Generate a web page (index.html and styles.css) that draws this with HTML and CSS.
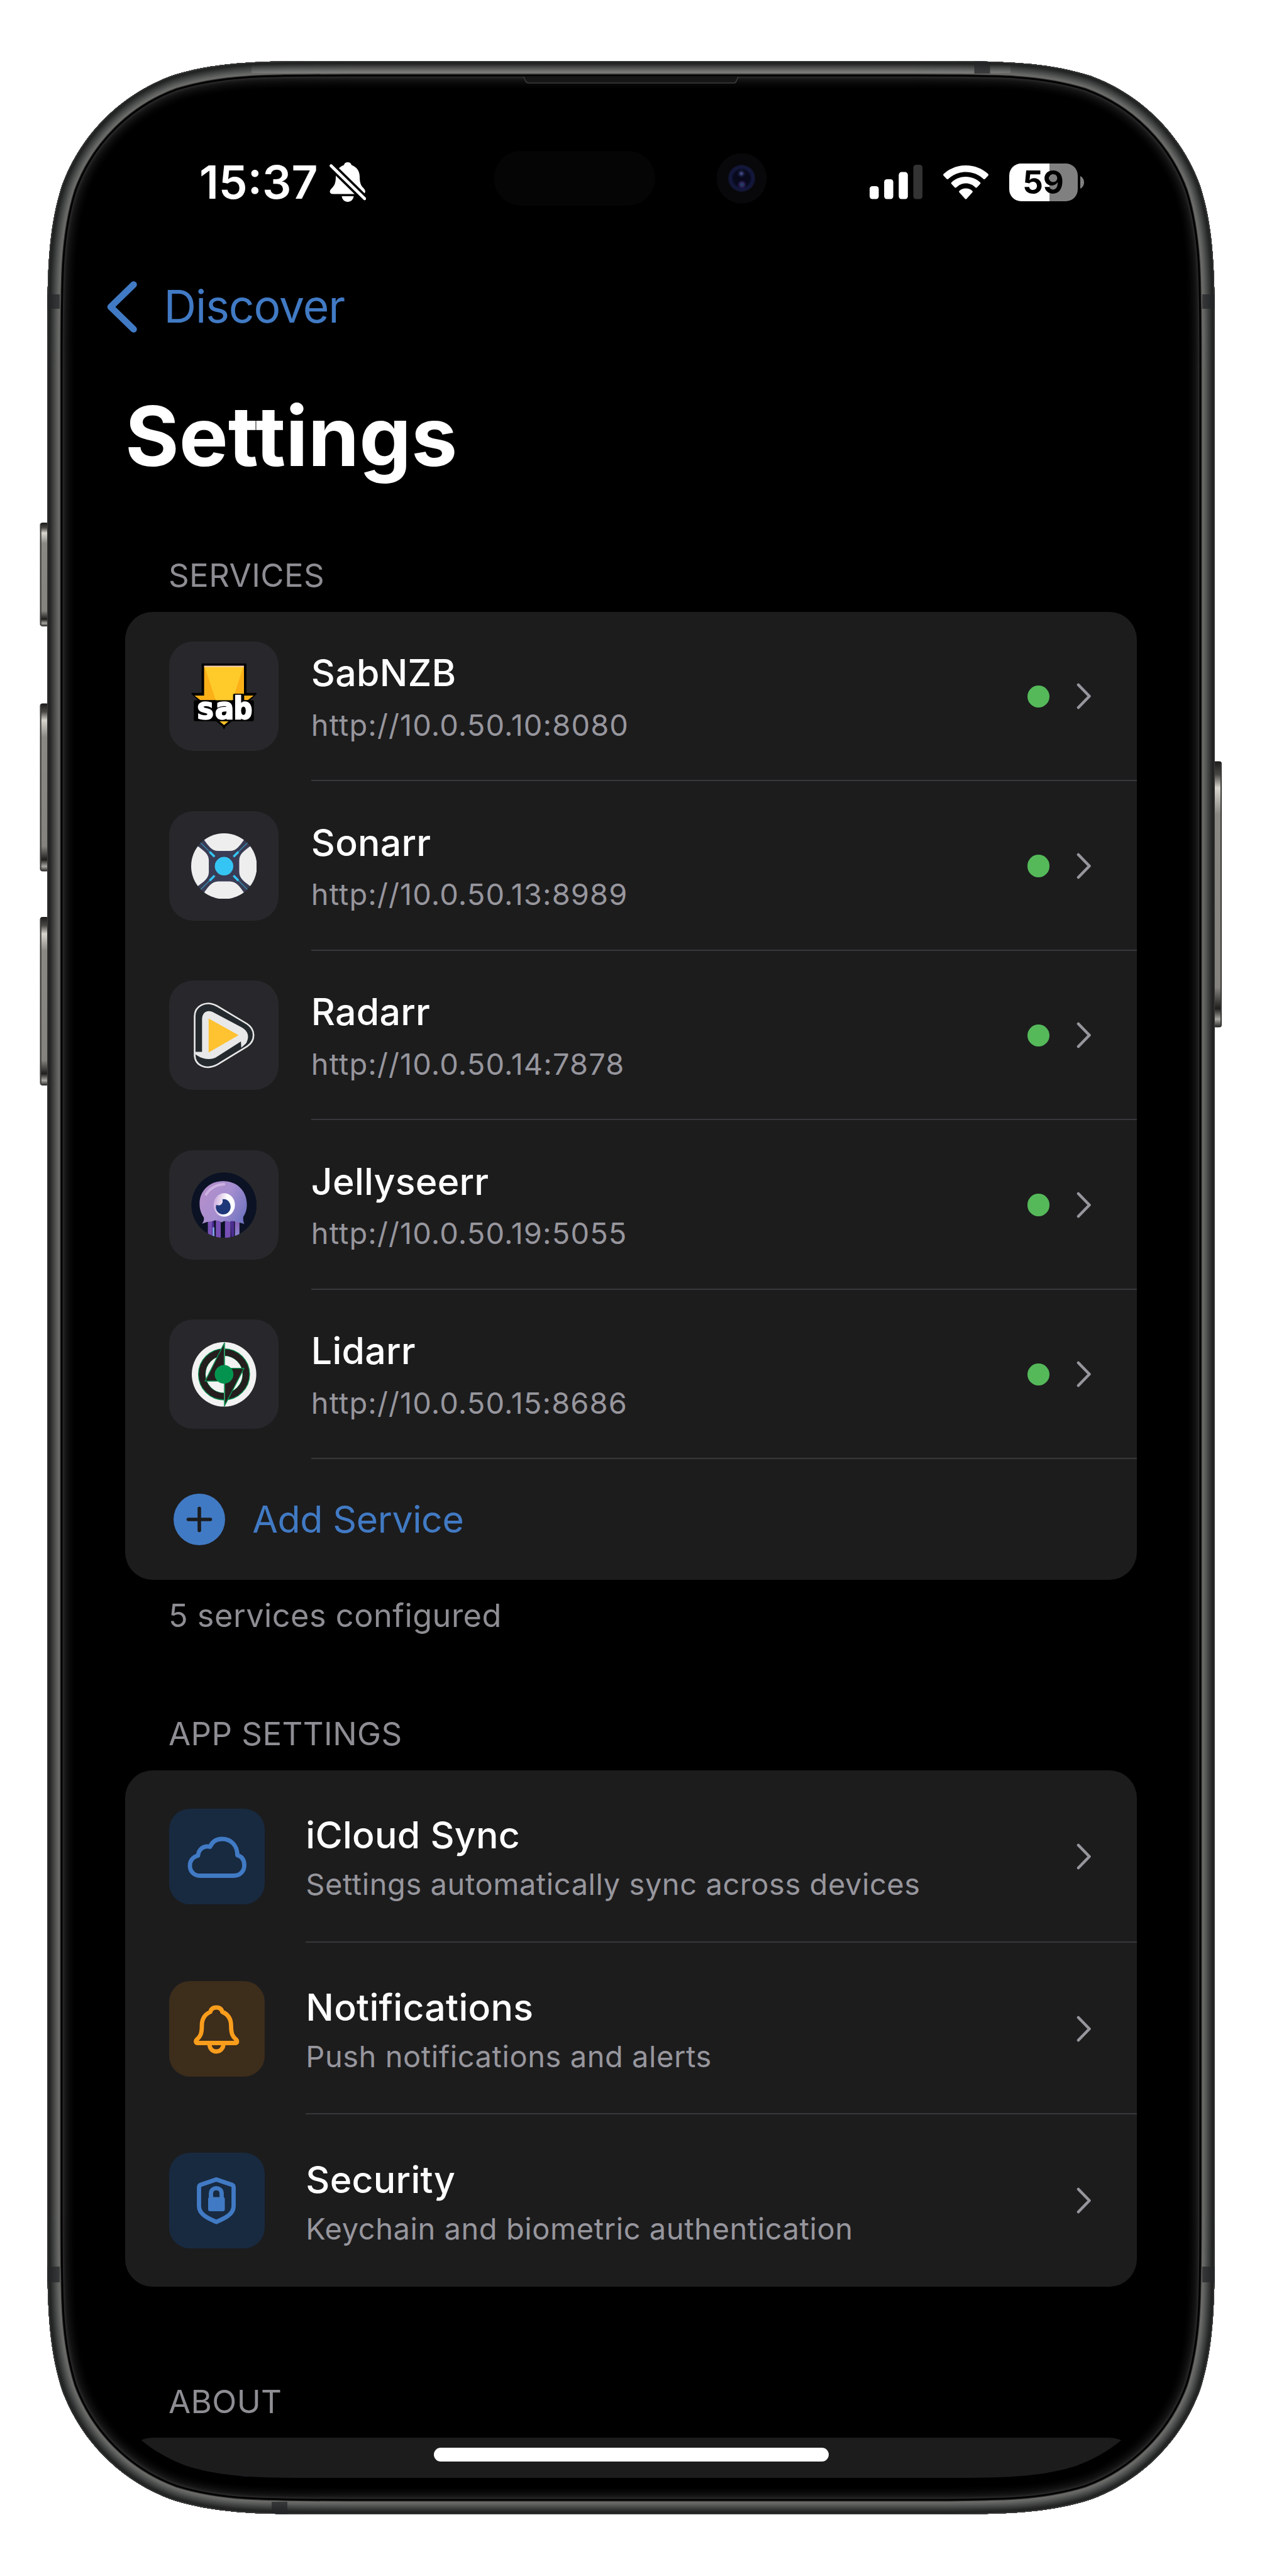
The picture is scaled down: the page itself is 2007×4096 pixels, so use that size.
FILE: index.html
```html
<!DOCTYPE html>
<html lang="en">
<head>
<meta charset="utf-8">
<title>Settings</title>
<link rel="stylesheet" href="styles.css">
</head>
<body>
<div class="phone">
  <svg class="chassis" viewBox="0 0 2007 4096" aria-hidden="true">
    <defs>
      <path id="body" d="M555 97H1452C1590.2 97 1659.3 97 1733.7 120.5C1814.9 150.1 1878.9 214.1 1908.5 295.3C1932 369.7 1932 438.8 1932 577V3518C1932 3656.2 1932 3725.3 1908.5 3799.7C1878.9 3880.9 1814.9 3944.9 1733.7 3974.5C1659.3 3998 1590.2 3998 1452 3998H555C416.8 3998 347.7 3998 273.3 3974.5C192.1 3944.9 128.1 3880.9 98.5 3799.7C75 3725.3 75 3656.2 75 3518V577C75 438.8 75 369.7 98.5 295.3C128.1 214.1 192.1 150.1 273.3 120.5C347.7 97 416.8 97 555 97Z"/>
      <clipPath id="bodyClip"><use href="#body"/></clipPath>
      <linearGradient id="key" x1="0" y1="0" x2="0" y2="1">
        <stop offset="0" stop-color="#1c1b1a"/><stop offset=".05" stop-color="#4a4845"/><stop offset=".1" stop-color="#d8d5ce"/><stop offset=".2" stop-color="#8a8883"/><stop offset=".85" stop-color="#85837e"/><stop offset=".93" stop-color="#1f1e1d"/><stop offset=".97" stop-color="#aaa8a2"/><stop offset="1" stop-color="#222"/>
      </linearGradient>
      <radialGradient id="lens"><stop offset="0" stop-color="#07071a"/><stop offset=".6" stop-color="#080a1c"/><stop offset=".8" stop-color="#14183f"/><stop offset="1" stop-color="#10142c"/></radialGradient>
      <radialGradient id="glintA"><stop offset="0" stop-color="#5560a8"/><stop offset="1" stop-color="#14183f" stop-opacity="0"/></radialGradient>
      <radialGradient id="glintB"><stop offset="0" stop-color="#14505a"/><stop offset=".5" stop-color="#32205e"/><stop offset="1" stop-color="#14183f" stop-opacity="0"/></radialGradient>
      <linearGradient id="topLight" x1="0" y1="0" x2="0" y2="1"><stop offset="0" stop-color="#fff" stop-opacity=".14"/><stop offset="1" stop-color="#fff" stop-opacity="0"/></linearGradient>
    </defs>
    <g fill="url(#key)">
      <rect x="63.7" y="831" width="14" height="165" rx="4"/>
      <rect x="63.7" y="1118.6" width="14" height="267" rx="4"/>
      <rect x="63.7" y="1458" width="14" height="268" rx="4"/>
      <rect x="1929" y="1210.4" width="14" height="423" rx="4"/>
    </g>
    <g fill="#3a3937">
      <rect x="63.7" y="833" width="2" height="161"/><rect x="63.7" y="1121" width="2" height="262"/><rect x="63.7" y="1461" width="2" height="262"/><rect x="1941" y="1213" width="2" height="418"/>
    </g>
    <g clip-path="url(#bodyClip)" fill="none">
      <use href="#body" fill="#000"/>
      <use href="#body" stroke="#020202" stroke-width="86"/>
      <use href="#body" stroke="#050505" stroke-width="80"/>
      <use href="#body" stroke="#090909" stroke-width="74"/>
      <use href="#body" stroke="#0e0e0e" stroke-width="68"/>
      <use href="#body" stroke="#141414" stroke-width="62"/>
      <use href="#body" stroke="#1c1c1c" stroke-width="57"/>
      <use href="#body" stroke="#262626" stroke-width="53"/>
      <use href="#body" stroke="#000" stroke-width="49"/>
      <use href="#body" stroke="#2c2c2c" stroke-width="43.5"/>
      <use href="#body" stroke="#6b6b68" stroke-width="41"/>
      <use href="#body" stroke="#666764" stroke-width="37"/>
      <use href="#body" stroke="#5c5e5c" stroke-width="33"/>
      <use href="#body" stroke="#525453" stroke-width="29"/>
      <use href="#body" stroke="#484a49" stroke-width="25"/>
      <use href="#body" stroke="#3e403f" stroke-width="21"/>
      <use href="#body" stroke="#343535" stroke-width="17"/>
      <use href="#body" stroke="#2a2b2b" stroke-width="13"/>
      <use href="#body" stroke="#222323" stroke-width="9"/>
      <use href="#body" stroke="#3a3a3a" stroke-width="2.4"/>
      <rect x="400" y="102" width="1207" height="14" fill="url(#topLight)" transform="matrix(1 0 0 -1 0 218)"/>
      <g fill="#25272a" opacity=".75">
        <rect x="75" y="468" width="20" height="23"/><rect x="1912" y="468" width="20" height="23"/>
        <rect x="75" y="3604" width="20" height="25"/><rect x="1912" y="3604" width="20" height="25"/>
        <rect x="1549.5" y="97" width="25" height="20"/><rect x="432" y="3978" width="25" height="20"/>
      </g>
    </g>
    <path d="M833 121.5L836 129Q838 131.8 842 131.8H1167Q1170 131.8 1171 129L1173.5 121.5Z" fill="#161616"/>
    <path d="M832.5 122L836 129Q838 132 842 132H1167Q1170 132 1171 129L1174 122" fill="none" stroke="#3c3c3c" stroke-width="1.5"/>
    <rect x="785.5" y="240" width="256.5" height="87" rx="43.5" fill="#050505"/>
    <circle cx="1179.5" cy="283.5" r="40" fill="#080709"/>
    <circle cx="1179.5" cy="283.5" r="21.5" fill="url(#lens)"/>
    <circle cx="1179" cy="276" r="7" fill="url(#glintA)"/>
    <circle cx="1180" cy="293.5" r="7.5" fill="url(#glintB)"/>
  </svg>

  <main class="screen">
    <div class="status">
      <div class="status-left">
        <span class="time">15:37</span>
        <svg class="muted" viewBox="0 0 58 63"><path fill="#fff" d="M29 0C32.5 0 34.6 2 35 4.5C43.5 7.5 48 14 48 23C48 33 50 37 54 41C57.5 44.5 57.5 48 55.5 49.5Q54.5 50.5 52 50.5H6C0 50.5 -1 46 3 42C8 37 10 33 10 23C10 14 14.5 7.5 23 4.5C23.4 2 25.5 0 29 0ZM19.5 54H38.5C38 59 34 63 29 63S20 59 19.5 54Z"/><path d="M2.5 5.5L56 58" stroke="#000" stroke-width="12"/><path d="M2.5 5.5L56 58" stroke="#fff" stroke-width="4.6" stroke-linecap="round"/></svg>
      </div>
      <div class="status-right">
        <svg class="bars" viewBox="0 0 84 55"><g fill="#fff"><rect y="34" width="14.5" height="20.5" rx="4.5"/><rect x="23.1" y="23" width="14.5" height="31.5" rx="4.5"/><rect x="46.3" y="11.6" width="14.5" height="42.9" rx="4.5"/></g><rect x="69.5" width="14.5" height="54.5" rx="4.5" fill="#333"/></svg>
        <svg class="wifi" viewBox="0 0 72 54"><g fill="#fff"><path d="M36 0C50 0 62.5 5.2 71.3 13.6Q72.6 15 71.3 16.4L66.5 21.5Q65.2 22.7 63.9 21.5C56.5 14.6 46.8 10.6 36 10.6S15.5 14.6 8.1 21.5Q6.8 22.7 5.5 21.5L.7 16.4Q-.6 15 .7 13.6C9.5 5.2 22 0 36 0Z"/><path d="M36 18C45 18 53 21.5 58.8 27Q60 28.3 58.8 29.6L53.7 34.9Q52.4 36 51.1 34.9C47.1 31 41.8 28.6 36 28.6S24.9 31 20.9 34.9Q19.6 36 18.3 34.9L13.2 29.6Q12 28.3 13.2 27C19 21.5 27 18 36 18Z"/><path d="M36 36.5C40 36.5 43.6 38 46.3 40.4Q47.4 41.6 46.3 43L37.3 53Q36 54.4 34.7 53L25.7 43Q24.6 41.6 25.7 40.4C28.4 38 32 36.5 36 36.5Z"/></g></svg>
        <div class="battery"><span class="pct">59</span></div>
        <svg class="nub" viewBox="0 0 6 20"><path d="M0 0C4 2 6 6 6 10S4 18 0 20Z" fill="#808080"/></svg>
      </div>
    </div>

    <nav class="nav">
      <svg class="back" viewBox="0 0 48 82"><path d="M42.5 5.5L6 41L42.5 76.5" fill="none" stroke="#417ac4" stroke-width="10.5" stroke-linecap="round" stroke-linejoin="round"/></svg>
      <span class="nav-label">Discover</span>
    </nav>

    <h1 class="title">Settings</h1>

    <h2 class="head head-services">SERVICES</h2>
    <section class="card">
      <div class="row">
        <div class="tile">
          <svg class="logo" viewBox="0 0 160 160"><path d="M27 0H133V73H158L139 92H101L80 158L59 92H21L2 73H27Z" fill="#000" stroke="#000" stroke-width="3" stroke-linejoin="round"/><path d="M31.5 6.5H128.5V78H152L138 89H22L8 78H31.5Z" fill="#fcb017"/><path d="M33 8H127L100 90H60Z" fill="#ffcb2b"/><path d="M31.5 7H128.5" stroke="#f7cfc0" stroke-width="3"/><path d="M62 138H98L80 153Z" fill="#ffc228" stroke="#000" stroke-width="5" stroke-linejoin="round"/><path d="M10 89.5H102V77Q102 73.5 106 73.5H126Q129 73.5 129 77V89.5H149Q152.5 89.5 152.5 93V137Q152.5 140.500 149 140.500H10Q6.5 140.500 6.5 137V93Q6.5 89.500 10 89.500Z" fill="#000"/><text class="sab" x="12" y="134" textLength="137" lengthAdjust="spacingAndGlyphs">sab</text></svg>
        </div>
        <div class="cell"><div class="labels"><span class="name">SabNZB</span><span class="sub">http://10.0.50.10:8080</span></div><i class="dot"></i><svg class="chev" viewBox="0 0 24 42"><path d="M3 3L20.5 21L3 39"/></svg></div>
      </div>
      <div class="row">
        <div class="tile">
          <svg class="logo" viewBox="0 0 160 160"><defs><clipPath id="son"><circle cx="80" cy="80" r="80"/></clipPath></defs><g clip-path="url(#son)"><rect width="160" height="160" fill="#3a3d54"/><g fill="#eee"><path id="lobe" d="M30 14C42 30 50 43 66 43H94C110 43 118 30 130 14L120 -10H40Z"/><use href="#lobe" transform="rotate(90 80 80)"/><use href="#lobe" transform="rotate(180 80 80)"/><use href="#lobe" transform="rotate(270 80 80)"/></g><g stroke="#35c5f4"><path d="M57 57L45 45M103 57L115 45M57 103L45 115M103 103L115 115" stroke-width="5.5"/><path d="M45 45L22 22M115 45L138 22M45 115L22 138M115 115L138 138" stroke-width="1.6" opacity=".75"/></g><circle cx="80" cy="80" r="22.5" fill="#35c5f4"/></g></svg>
        </div>
        <div class="cell"><div class="labels"><span class="name">Sonarr</span><span class="sub">http://10.0.50.13:8989</span></div><i class="dot"></i><svg class="chev" viewBox="0 0 24 42"><path d="M3 3L20.5 21L3 39"/></svg></div>
      </div>
      <div class="row">
        <div class="tile">
          <svg class="logo" viewBox="0 0 160 160"><path d="M8.5 34C8.5 8 36 -6 62 8L136 52C157 66 157 93 136 107L64 151C36 166 8.5 153 8.5 127Z" fill="#24292e" stroke="#e8e8e8" stroke-width="4"/><path d="M26.5 42C26.5 24 38 17 52 23L122 60C140 70 142 84 134 99L122 110L121 95L64 131C50 141 28 140 10 126V120H26.5Z" fill="#e8e8e8"/><path d="M42.5 39L115.5 79.5L42.5 121.5Z" fill="#ffc230"/></svg>
        </div>
        <div class="cell"><div class="labels"><span class="name">Radarr</span><span class="sub">http://10.0.50.14:7878</span></div><i class="dot"></i><svg class="chev" viewBox="0 0 24 42"><path d="M3 3L20.5 21L3 39"/></svg></div>
      </div>
      <div class="row">
        <div class="tile">
          <svg class="logo" viewBox="0 0 160 160"><defs><clipPath id="jel"><circle cx="80" cy="80" r="79.5"/></clipPath><linearGradient id="jh" x1="0" y1=".3" x2="1" y2=".8"><stop offset="0" stop-color="#b58fcb"/><stop offset=".5" stop-color="#a58ed0"/><stop offset="1" stop-color="#6f74c0"/></linearGradient><linearGradient id="je" x1="0" y1=".3" x2="1" y2=".5"><stop offset="0" stop-color="#c9a6dc"/><stop offset=".6" stop-color="#fff"/></linearGradient><linearGradient id="jt" x1="0" y1="0" x2="0" y2="1"><stop offset="0" stop-color="#8a5cb8"/><stop offset="1" stop-color="#8c8fd4"/></linearGradient></defs><g clip-path="url(#jel)"><rect width="160" height="160" fill="#0b1224"/><g fill="#7650b4"><rect x="40.6" y="112" width="11" height="50"/><rect x="60" y="112" width="12" height="50"/><rect x="82.3" y="112" width="13.5" height="50"/></g><path d="M51 115H55L58 160H50ZM95.5 115H104.5V160H98Z" fill="#4c2d92"/><rect x="52" y="134" width="4.5" height="28" fill="#7f9fe0"/><rect x="106.5" y="115" width="11" height="50" fill="url(#jt)"/><path d="M20.5 76C20.5 44 46 21.5 78 21.5S135.5 44 135.5 78C135.5 92 132 100 126.5 109Q126 118 129 126Q118 121 112 122Q98 116 94 121Q80 116 75 122Q62 114 52 119Q38 120 26.5 125Q32 118 31 110C24 100 20.5 90 20.5 76Z" fill="url(#jh)"/><path d="M36 54Q52 30 80 29" stroke="#cdb2e2" stroke-width="6" fill="none" stroke-linecap="round"/><ellipse cx="80.5" cy="79.5" rx="26" ry="28.5" fill="url(#je)"/><path d="M76 66C88 63 96 74 96 84C96 95 87 102.5 78 102.5C68 102.5 60 94 60 84Q60 80 62 79C72 84 79 74 76 66Z" fill="#1e3779"/></g></svg>
        </div>
        <div class="cell"><div class="labels"><span class="name">Jellyseerr</span><span class="sub">http://10.0.50.19:5055</span></div><i class="dot"></i><svg class="chev" viewBox="0 0 24 42"><path d="M3 3L20.5 21L3 39"/></svg></div>
      </div>
      <div class="row">
        <div class="tile">
          <svg class="logo" viewBox="0 0 160 160"><circle cx="80" cy="80" r="78.5" fill="#f2f2f2"/><circle cx="80" cy="80" r="54" fill="none" stroke="#058a4b" stroke-width="18.5"/><circle cx="80" cy="80" r="53.5" fill="none" stroke="#251d1e" stroke-width="15.5"/><g fill="#251d1e" stroke="#0b8f4f" stroke-width="2.2"><path d="M81 3V80L64 96.5H34Z"/><path d="M81 157V80L97 65.4H128.5Z"/></g><path d="M81 3V157" stroke="#2f9b66" stroke-width="3"/><circle cx="80" cy="80" r="22.8" fill="#04934f"/></svg>
        </div>
        <div class="cell"><div class="labels"><span class="name">Lidarr</span><span class="sub">http://10.0.50.15:8686</span></div><i class="dot"></i><svg class="chev" viewBox="0 0 24 42"><path d="M3 3L20.5 21L3 39"/></svg></div>
      </div>
      <div class="add">
        <svg class="plus" viewBox="0 0 82 82"><circle cx="41" cy="41" r="41" fill="#417ac4"/><path d="M41 23.5V58.5M23.5 41H58.5" stroke="#1c1c1d" stroke-width="5.6" stroke-linecap="round"/></svg>
        <span class="add-label">Add Service</span>
      </div>
    </section>
    <p class="foot">5 services configured</p>

    <h2 class="head head-app">APP SETTINGS</h2>
    <section class="card">
      <div class="row app">
        <div class="tile blue"><svg viewBox="0 0 152 152"><path d="M49 106.5C38.5 106.5 33 98.5 33 90.5C33 82.5 38 76.5 46 74.5C46.5 66 54 57.5 65 60.5C69 51.5 76 48 84 48C98 48 108.5 58 108.5 74C116.5 76 119.5 82.5 119.5 90C119.5 99 113 106.5 102.5 106.5Z"/></svg></div>
        <div class="cell"><div class="labels"><span class="name">iCloud Sync</span><span class="sub">Settings automatically sync across devices</span></div><svg class="chev" viewBox="0 0 24 42"><path d="M3 3L20.5 21L3 39"/></svg></div>
      </div>
      <div class="row app">
        <div class="tile orange"><svg viewBox="0 0 152 152"><path d="M75 42C80 42 83.5 44.5 84.5 49C94 53 98.5 61 98.5 71C98.5 84 101 88 106 92.5C109 95.5 108.5 98.5 105 98.5H45.5C42 98.5 41.5 95.5 44.5 92.5C49.5 88 52 84 52 71C52 61 56.5 53 65.5 49C66.5 44.5 70 42 75 42ZM64 99C64 107 68.5 112 75 112S86.5 107 86.5 99"/></svg></div>
        <div class="cell"><div class="labels"><span class="name">Notifications</span><span class="sub">Push notifications and alerts</span></div><svg class="chev" viewBox="0 0 24 42"><path d="M3 3L20.5 21L3 39"/></svg></div>
      </div>
      <div class="row app">
        <div class="tile blue"><svg viewBox="0 0 152 152"><path d="M75 42.5L100 51Q102.5 52 102.5 55V85C102.5 98 88 104.5 75 110C62 104.5 47.5 98 47.5 85V55Q47.5 52 50 51Z"/><path d="M66.5 72V65C66.5 53.5 83.5 53.5 83.5 65V72" stroke-width="4.5"/><rect x="62" y="70.5" width="26.5" height="22.5" rx="3" fill="#417ac4" stroke="none"/></svg></div>
        <div class="cell"><div class="labels"><span class="name">Security</span><span class="sub">Keychain and biometric authentication</span></div><svg class="chev" viewBox="0 0 24 42"><path d="M3 3L20.5 21L3 39"/></svg></div>
      </div>
    </section>

    <h2 class="head head-about">ABOUT</h2>
    <section class="card peek"><div class="peek-tile"></div></section>
    <div class="home"></div>
  </main>
</div>
</body>
</html>
```
FILE: styles.css
```css
* { box-sizing: border-box; margin: 0; padding: 0; }
body { width: 2007px; height: 4096px; background: #fff; overflow: hidden; font-family: Inter, "Liberation Sans", sans-serif; color: #fff; }
svg { display: block; flex: none; }

.phone { position: relative; width: 2007px; height: 4096px; padding: 155px 129px 0 130px; }
.chassis { position: absolute; left: 0; top: 0; width: 2007px; height: 4096px; }

.screen {
  position: relative; width: 1748px; height: 3785px; overflow: hidden;
  clip-path: path("M0 0H1748V3384.5C1748 3499.8 1748 3557.5 1728.4 3619.5C1703.7 3687.3 1650.3 3740.7 1582.5 3765.4C1520.5 3785 1462.8 3785 1347.5 3785H400.5C285.2 3785 227.5 3785 165.5 3765.4C97.7 3740.7 44.3 3687.3 19.6 3619.5C0 3557.5 0 3499.8 0 3384.5Z");
}

.status { display: flex; justify-content: space-between; align-items: center; height: 269.4px; padding: 0 154px 0 187px; }
.status-left { display: flex; align-items: center; gap: 18px; }
.status-right { display: flex; align-items: center; }
.time { font-size: 73px; font-weight: 600; }
.muted { width: 58px; height: 63px; }
.bars { width: 84px; height: 55px; margin-right: 33px; }
.wifi { width: 72px; height: 54px; margin-right: 33px; }
.battery { display: flex; align-items: center; justify-content: center; width: 109px; height: 60px; border-radius: 19px; background: linear-gradient(90deg, #fff 59%, #808080 59%); }
.pct { font-size: 51px; font-weight: 700; color: #000; line-height: 60px; }
.nub { width: 6px; height: 20px; margin-left: 4.5px; }

.nav { display: flex; align-items: center; gap: 43px; height: 127px; padding-left: 39.5px; }
.back { width: 48px; height: 82px; }
.nav-label { font-size: 71.5px; color: #417ac4; letter-spacing: -1.1px; line-height: 127px; }

.title { height: 285px; line-height: 285px; padding-left: 69px; font-size: 131px; font-weight: 700; }

.head { padding-left: 138px; font-size: 51px; font-weight: 400; letter-spacing: .4px; color: #8d8d93; }
.head-services { height: 136.3px; padding-top: 20px; line-height: 117px; }
.head-app { height: 189.5px; padding-top: 74px; line-height: 116.5px; }
.head-about { height: 239.6px; padding-top: 124.6px; line-height: 115px; }
.foot { height: 113.4px; line-height: 113.4px; padding-left: 138px; font-size: 50.5px; letter-spacing: .48px; color: #8d8d93; }

.card { width: 1609px; margin-left: 69.3px; border-radius: 44px; background: #1c1c1d; overflow: hidden; }
.row { display: flex; align-items: center; height: 269.5px; padding-left: 69.5px; }
.tile { display: flex; align-items: center; justify-content: center; flex: none; width: 174px; height: 174px; border-radius: 38px; background: #28282c; }
.logo { width: 104.6px; height: 104.6px; }
.sab { font: 700 73px "DejaVu Sans Mono", monospace; fill: #fff; stroke: #fff; stroke-width: 3.5px; }
.cell { display: flex; align-items: center; flex: 1; align-self: stretch; margin-left: 52px; padding-right: 72px; box-shadow: inset 0 -2px #38383b; }
.labels { display: flex; flex-direction: column; flex: 1; white-space: nowrap; }
.name { font-size: 59px; font-weight: 500; letter-spacing: .25px; line-height: 91.6px; }
.sub { font-size: 47px; line-height: 74.8px; letter-spacing: 1.1px; color: #97969d; }
.dot { width: 35.4px; height: 35.4px; border-radius: 50%; background: #55b95a; margin-right: 43px; }
.chev { width: 24px; height: 42px; }
.chev path { fill: none; stroke: #97969c; stroke-width: 4.6px; stroke-linecap: round; stroke-linejoin: round; }

.add { display: flex; align-items: center; gap: 43px; height: 191.6px; padding-left: 77px; }
.plus { width: 82px; height: 82px; }
.add-label { font-size: 59px; letter-spacing: -.4px; color: #417ac4; }

.app { height: 273.9px; }
.app .tile { width: 152px; height: 152px; border-radius: 33px; }
.app .tile svg { width: 152px; height: 152px; }
.app .tile path { fill: none; stroke-width: 6.8px; stroke-linejoin: round; }
.blue { background: #182a40; stroke: #417ac4; }
.orange { background: #3d2d1b; stroke: #f99d1c; }
.app .cell { margin-left: 65.5px; }
.app .name { line-height: 88.6px; }
.app .sub { line-height: 67.2px; letter-spacing: .57px; }
.app:last-child .cell { box-shadow: none; }

.peek { height: 200px; padding: 61px 0 0 69.5px; }
.peek-tile { width: 152px; height: 152px; border-radius: 33px; background: #3a2545; }
.home { position: absolute; left: 559.7px; top: 3737px; width: 628px; height: 22px; border-radius: 11px; background: #fff; }
```
